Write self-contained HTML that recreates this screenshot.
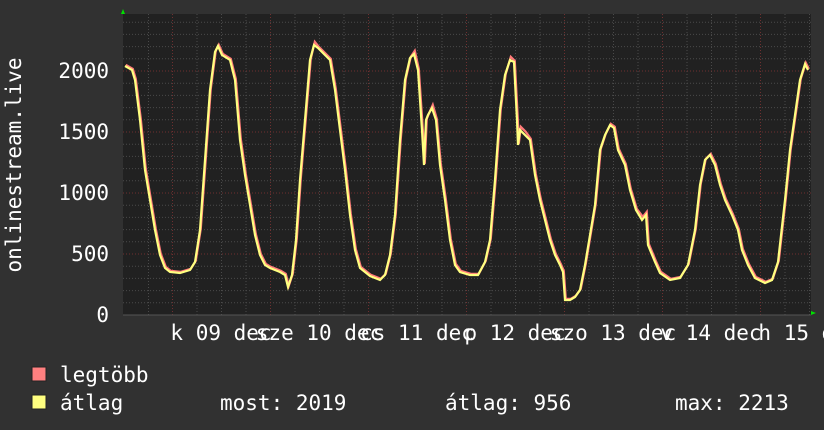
<!DOCTYPE html>
<html><head><meta charset="utf-8"><style>
html,body{margin:0;padding:0;background:#313131;}
svg{display:block}
text{font-family:"DejaVu Sans Mono","Liberation Mono",monospace;font-size:21px;fill:#fff}
</style></head><body>
<svg width="824" height="430" viewBox="0 0 824 430" xmlns="http://www.w3.org/2000/svg">
<rect width="824" height="430" fill="#313131"/>
<rect x="123" y="14" width="688" height="301" fill="#212121"/>
<g stroke="#4a4a4a" stroke-width="1" stroke-dasharray="1,2">
<line x1="123" x2="811" y1="302.8" y2="302.8"/><line x1="123" x2="811" y1="290.6" y2="290.6"/><line x1="123" x2="811" y1="278.4" y2="278.4"/><line x1="123" x2="811" y1="266.2" y2="266.2"/>
<line x1="123" x2="811" y1="241.8" y2="241.8"/><line x1="123" x2="811" y1="229.6" y2="229.6"/><line x1="123" x2="811" y1="217.4" y2="217.4"/><line x1="123" x2="811" y1="205.2" y2="205.2"/>
<line x1="123" x2="811" y1="180.8" y2="180.8"/><line x1="123" x2="811" y1="168.6" y2="168.6"/><line x1="123" x2="811" y1="156.4" y2="156.4"/><line x1="123" x2="811" y1="144.2" y2="144.2"/>
<line x1="123" x2="811" y1="119.8" y2="119.8"/><line x1="123" x2="811" y1="107.6" y2="107.6"/><line x1="123" x2="811" y1="95.4" y2="95.4"/><line x1="123" x2="811" y1="83.2" y2="83.2"/>
<line x1="123" x2="811" y1="58.8" y2="58.8"/><line x1="123" x2="811" y1="46.6" y2="46.6"/><line x1="123" x2="811" y1="34.4" y2="34.4"/><line x1="123" x2="811" y1="22.2" y2="22.2"/>
<line y1="14" y2="315" x1="148.5" x2="148.5"/><line y1="14" y2="315" x1="197" x2="197"/><line y1="14" y2="315" x1="221.5" x2="221.5"/><line y1="14" y2="315" x1="246" x2="246"/>
<line y1="14" y2="315" x1="295" x2="295"/><line y1="14" y2="315" x1="319.5" x2="319.5"/><line y1="14" y2="315" x1="344" x2="344"/>
<line y1="14" y2="315" x1="393" x2="393"/><line y1="14" y2="315" x1="417.5" x2="417.5"/><line y1="14" y2="315" x1="442" x2="442"/>
<line y1="14" y2="315" x1="491" x2="491"/><line y1="14" y2="315" x1="515.5" x2="515.5"/><line y1="14" y2="315" x1="540" x2="540"/>
<line y1="14" y2="315" x1="589" x2="589"/><line y1="14" y2="315" x1="613.5" x2="613.5"/><line y1="14" y2="315" x1="638" x2="638"/>
<line y1="14" y2="315" x1="687" x2="687"/><line y1="14" y2="315" x1="711.5" x2="711.5"/><line y1="14" y2="315" x1="736" x2="736"/>
<line y1="14" y2="315" x1="785" x2="785"/><line y1="14" y2="315" x1="809.5" x2="809.5"/>
</g>
<g stroke="#6e3030" stroke-width="1" stroke-dasharray="1,2">
<line x1="123" x2="811" y1="254" y2="254"/><line x1="123" x2="811" y1="193" y2="193"/><line x1="123" x2="811" y1="132" y2="132"/><line x1="123" x2="811" y1="71" y2="71"/>
<line y1="14" y2="315" x1="172.5" x2="172.5"/><line y1="14" y2="315" x1="270.5" x2="270.5"/><line y1="14" y2="315" x1="368.5" x2="368.5"/><line y1="14" y2="315" x1="466.5" x2="466.5"/><line y1="14" y2="315" x1="564.5" x2="564.5"/><line y1="14" y2="315" x1="662.5" x2="662.5"/><line y1="14" y2="315" x1="760.5" x2="760.5"/>
</g>
<polyline fill="none" stroke="#ff7a7a" stroke-width="2.2" transform="translate(0.8,-1.2)" points="125,66 132,70 135,80 140,120 145,170 150,200 155,230 160,255 165,268 170,272 180,273 190,270 195,262 200,230 205,160 210,90 215,52 218,46 222,55 230,60 235,80 240,140 245,175 250,205 255,235 260,255 265,265 270,268 280,272 285,275 288,287 292,275 296,240 300,180 305,120 310,60 314,43 318,48 325,55 330,60 335,90 340,130 345,170 350,215 355,250 360,268 370,276 380,280 385,275 390,255 395,215 400,140 405,80 410,58 414,52 418,70 422,130 424,165 426,120 428,115 432,106 436,120 440,165 445,200 450,240 455,265 460,272 470,275 478,275 485,262 490,240 495,180 500,110 505,75 510,58 514,62 517,120 518,145 520,128 525,133 530,140 535,175 540,200 545,220 550,240 555,255 560,265 563,272 565,300 570,300 575,297 580,290 585,265 590,235 595,205 600,150 605,135 610,125 614,128 618,150 625,165 630,190 636,210 642,218 646,213 648,245 655,262 660,273 670,280 680,278 688,265 695,230 700,185 705,160 710,155 715,165 720,185 725,200 732,215 738,230 742,250 748,265 755,278 765,283 772,280 778,262 785,200 790,150 795,115 800,80 805,64 808,70"/>
<polyline fill="none" stroke="#ffff80" stroke-width="2.2" points="125,66 132,70 135,80 140,120 145,170 150,200 155,230 160,255 165,268 170,272 180,273 190,270 195,262 200,230 205,160 210,90 215,52 218,46 222,55 230,60 235,80 240,140 245,175 250,205 255,235 260,255 265,265 270,268 280,272 285,275 288,287 292,275 296,240 300,180 305,120 310,60 314,45 318,48 325,55 330,60 335,90 340,130 345,170 350,215 355,250 360,268 370,276 380,280 385,275 390,255 395,215 400,140 405,80 410,58 414,54 418,70 422,130 424,165 426,120 428,115 432,108 436,120 440,165 445,200 450,240 455,265 460,272 470,275 478,275 485,262 490,240 495,180 500,110 505,75 510,60 514,62 517,120 518,145 520,130 525,135 530,140 535,175 540,200 545,220 550,240 555,255 560,265 563,272 565,300 570,300 575,297 580,290 585,265 590,235 595,205 600,150 605,135 610,125 614,128 618,150 625,165 630,190 636,210 642,220 646,215 648,245 655,262 660,273 670,280 680,278 688,265 695,230 700,185 705,160 710,155 715,165 720,185 725,200 732,215 738,230 742,250 748,265 755,278 765,283 772,280 778,262 785,200 790,150 795,115 800,80 805,64 808,70"/>
<line x1="123" y1="315" x2="811" y2="315" stroke="#555" stroke-width="1"/>
<polygon points="121,14 125,14 123,9" fill="#00e000"/>
<polygon points="811,311 811,315 816,313" fill="#00e000"/>
<g text-anchor="end">
<text x="109" y="78">2000</text><text x="109" y="139">1500</text><text x="109" y="200">1000</text><text x="109" y="261">500</text><text x="109" y="322">0</text>
</g>
<text transform="translate(21,165) rotate(-90)" text-anchor="middle">onlinestream.live</text>
<g text-anchor="middle">
<text x="221" y="340">k 09 dec</text>
<text x="319" y="340">sze 10 dec</text>
<text x="417" y="340">cs 11 dec</text>
<text x="515" y="340">p 12 dec</text>
<text x="613" y="340">szo 13 dec</text>
<text x="711" y="340">v 14 dec</text>
<text x="809" y="340">h 15 dec</text>
</g>
<rect x="32" y="367" width="14" height="14" fill="#ff8080" stroke="#222" stroke-width="1"/>
<rect x="32" y="395" width="14" height="14" fill="#ffff80" stroke="#222" stroke-width="1"/>
<text x="60" y="382">legtöbb</text>
<text x="60" y="410">átlag</text>
<text x="220" y="410">most: 2019</text>
<text x="445" y="410">átlag: 956</text>
<text x="675" y="410">max: 2213</text>
</svg>
</body></html>
